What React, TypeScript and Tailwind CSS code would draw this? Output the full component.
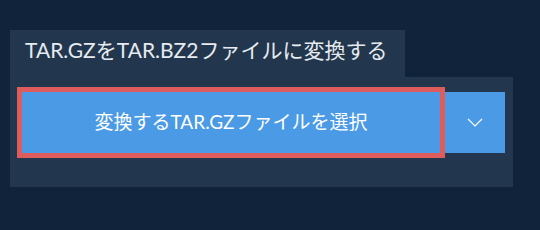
export default function App() {
  return (
    <main
      className="min-h-screen w-full bg-[#11233a] pt-[30px] pl-[10px]"
      style={{ fontFamily: 'Lato, "Noto Sans CJK JP", sans-serif' }}
    >
      <div className="w-[503px]">
        <div className="flex h-[47px] w-[395px] items-start bg-[#22364d] pl-[15px] pt-[5px]">
          <h1 className="text-[21px] leading-[30px] text-[#e6ebf0]">
            TAR.GZをTAR.BZ2ファイルに変換する
          </h1>
        </div>
        <div className="h-[110px] bg-[#22364d] pl-[12px] pr-[8px] pt-[15px]">
          <div className="flex h-[61px] gap-[5px]">
            <button className="flex flex-1 items-center justify-center bg-[#4b9ae6] text-[19px] text-white outline-[5px] outline-[#de5c5b] outline-solid">
              変換するTAR.GZファイルを選択
            </button>
            <button className="flex w-[60px] items-center justify-center bg-[#4b9ae6]">
              <svg width="16" height="9" viewBox="0 0 16 9" fill="none">
                <path d="M1 1 L8 8 L15 1" stroke="white" strokeWidth="1.2" />
              </svg>
            </button>
          </div>
        </div>
      </div>
    </main>
  )
}
